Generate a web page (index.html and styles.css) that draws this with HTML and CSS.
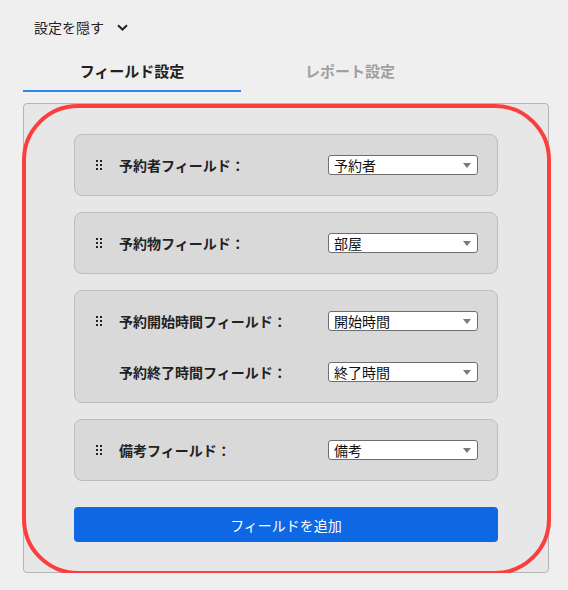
FILE: index.html
```html
<!DOCTYPE html>
<html lang="ja">
<head>
<meta charset="utf-8">
<link rel="stylesheet" href="styles.css">
</head>
<body>
<div class="page">
  <div class="toggle">
    <span>設定を隠す</span>
    <svg class="chevron" width="11" height="7" viewBox="0 0 11 7"><path d="M1 1.2 L5.5 5.5 L10 1.2" fill="none" stroke="#222" stroke-width="2"/></svg>
  </div>
  <div class="tabs">
    <div class="tab active">フィールド設定</div>
    <div class="tab">レポート設定</div>
  </div>
  <div class="panel">
    <div class="card">
      <div class="row">
        <span class="handle"><svg width="6" height="10" viewBox="0 0 6 10"><rect x="0" y="0" width="2" height="2"/><rect x="4" y="0" width="2" height="2"/><rect x="0" y="4" width="2" height="2"/><rect x="4" y="4" width="2" height="2"/><rect x="0" y="8" width="2" height="2"/><rect x="4" y="8" width="2" height="2"/></svg></span>
        <span class="label">予約者フィールド：</span>
        <div class="select"><span>予約者</span><i class="arrow"></i></div>
      </div>
    </div>
    <div class="card">
      <div class="row">
        <span class="handle"><svg width="6" height="10" viewBox="0 0 6 10"><rect x="0" y="0" width="2" height="2"/><rect x="4" y="0" width="2" height="2"/><rect x="0" y="4" width="2" height="2"/><rect x="4" y="4" width="2" height="2"/><rect x="0" y="8" width="2" height="2"/><rect x="4" y="8" width="2" height="2"/></svg></span>
        <span class="label">予約物フィールド：</span>
        <div class="select"><span>部屋</span><i class="arrow"></i></div>
      </div>
    </div>
    <div class="card">
      <div class="row">
        <span class="handle"><svg width="6" height="10" viewBox="0 0 6 10"><rect x="0" y="0" width="2" height="2"/><rect x="4" y="0" width="2" height="2"/><rect x="0" y="4" width="2" height="2"/><rect x="4" y="4" width="2" height="2"/><rect x="0" y="8" width="2" height="2"/><rect x="4" y="8" width="2" height="2"/></svg></span>
        <span class="label">予約開始時間フィールド：</span>
        <div class="select"><span>開始時間</span><i class="arrow"></i></div>
      </div>
      <div class="row">
        <span class="handle"></span>
        <span class="label">予約終了時間フィールド：</span>
        <div class="select"><span>終了時間</span><i class="arrow"></i></div>
      </div>
    </div>
    <div class="card">
      <div class="row">
        <span class="handle"><svg width="6" height="10" viewBox="0 0 6 10"><rect x="0" y="0" width="2" height="2"/><rect x="4" y="0" width="2" height="2"/><rect x="0" y="4" width="2" height="2"/><rect x="4" y="4" width="2" height="2"/><rect x="0" y="8" width="2" height="2"/><rect x="4" y="8" width="2" height="2"/></svg></span>
        <span class="label">備考フィールド：</span>
        <div class="select"><span>備考</span><i class="arrow"></i></div>
      </div>
    </div>
    <button class="add">フィールドを追加</button>
    <div class="highlight"></div>
  </div>
</div>
</body>
</html>
```

FILE: styles.css
```css
* { box-sizing: border-box; }
html, body {
  margin: 0;
  background: #efefef;
  font-family: "Noto Sans CJK JP", "Noto Sans", sans-serif;
  color: #222;
}
.page {
  padding: 17px 19px 0 23px;
}
.toggle {
  display: flex;
  align-items: center;
  gap: 13px;
  padding-left: 11px;
  height: 20px;
  font-size: 14px;
  line-height: 20px;
}
.chevron { display: block; }
.tabs {
  display: flex;
  margin-top: 15px;
}
.tab {
  width: 218px;
  text-align: center;
  font-size: 15px;
  font-weight: bold;
  line-height: 20px;
  padding: 9px 0 9px;
  color: #a0a0a0;
  border-bottom: 2px solid transparent;
}
.tab.active {
  color: #222;
  border-bottom-color: #2b88f0;
}
.panel {
  position: relative;
  margin-top: 11px;
  background: #e7e7e7;
  border: 1px solid #b4b4b4;
  border-radius: 4px;
  padding: 30px 50px 30px;
  display: flex;
  flex-direction: column;
  gap: 16px;
}
.card {
  background: #d9d9d9;
  border: 1px solid #bdbdbd;
  border-radius: 8px;
  padding: 20px 19px 20px 21px;
  display: flex;
  flex-direction: column;
  gap: 31px;
}
.row {
  display: flex;
  align-items: center;
  height: 20px;
}
.handle {
  width: 23px;
  display: flex;
  align-items: center;
}
.handle svg { display: block; fill: #222; }
.label {
  width: 209px;
  font-size: 14px;
  font-weight: bold;
  line-height: 20px;
}
.select {
  width: 150px;
  height: 20px;
  background: #fff;
  border: 1px solid #6e6e6e;
  border-radius: 3px;
  display: flex;
  align-items: center;
  justify-content: space-between;
  padding: 0 6px 0 5px;
  font-size: 14px;
  line-height: 18px;
  color: #111;
}
.arrow {
  width: 0;
  height: 0;
  border-left: 4px solid transparent;
  border-right: 4px solid transparent;
  border-top: 5px solid #7a7a7a;
}
.add {
  margin-top: 10px;
  height: 35px;
  border: none;
  border-radius: 4px;
  background: #0e67e3;
  color: #fff;
  font-family: inherit;
  font-size: 14px;
  padding: 0;
}
.highlight {
  position: absolute;
  left: -2px;
  right: -3px;
  top: 0;
  bottom: -3px;
  border: 4px solid #fb3e3e;
  border-radius: 56px;
  pointer-events: none;
}
```
